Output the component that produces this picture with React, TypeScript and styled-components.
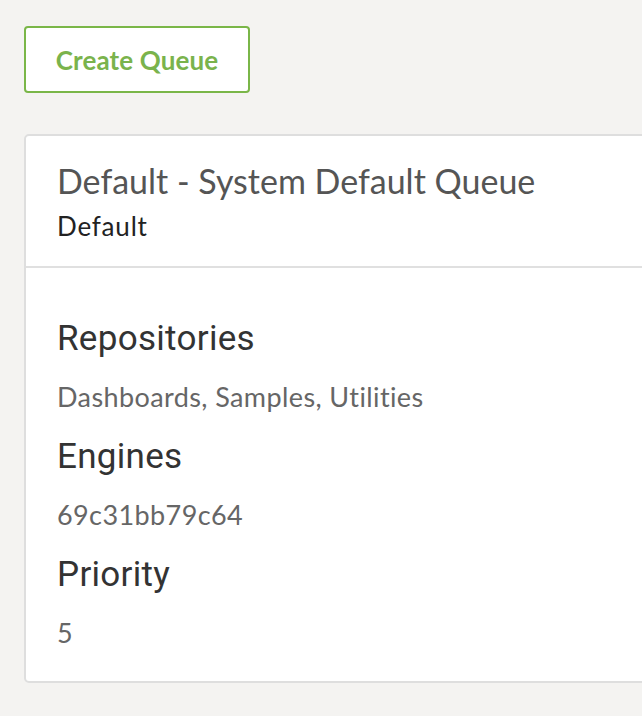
import React from 'react';
import styled, { createGlobalStyle } from 'styled-components';

const GlobalStyle = createGlobalStyle`
  html, body {
    margin: 0;
    padding: 0;
    background: #f4f3f1;
  }
  body {
    font-family: Lato, "Open Sans", sans-serif;
  }
`;

interface QueueField {
  label: string;
  value: string;
}

const queue = {
  title: 'Default - System Default Queue',
  name: 'Default',
  fields: [
    { label: 'Repositories', value: 'Dashboards, Samples, Utilities' },
    { label: 'Engines', value: '69c31bb79c64' },
    { label: 'Priority', value: '5' },
  ] as QueueField[],
};

export default function App() {
  return (
    <>
      <GlobalStyle />
      <Page>
        <CreateButton type="button">Create Queue</CreateButton>
        <Card>
          <CardHeader>
            <Title>{queue.title}</Title>
            <Subtitle>{queue.name}</Subtitle>
          </CardHeader>
          <CardBody>
            {queue.fields.map((field) => (
              <Field key={field.label}>
                <FieldLabel>{field.label}</FieldLabel>
                <FieldValue>{field.value}</FieldValue>
              </Field>
            ))}
          </CardBody>
        </Card>
      </Page>
    </>
  );
}

const Page = styled.div`
  display: flex;
  flex-direction: column;
  align-items: flex-start;
  gap: 41px;
  padding: 26px 0 34px 24px;
  overflow: hidden;
`;

const CreateButton = styled.button`
  box-sizing: border-box;
  width: 226px;
  height: 67px;
  background: #fff;
  border: 2px solid #7ab648;
  border-radius: 4px;
  color: #7ab34c;
  font-family: Lato, sans-serif;
  font-weight: 700;
  font-size: 26px;
  letter-spacing: 0.1px;
  cursor: pointer;
`;

const Card = styled.div`
  box-sizing: border-box;
  width: 680px;
  flex-shrink: 0;
  background: #fff;
  border: 2px solid #dedede;
  border-radius: 5px;
`;

const CardHeader = styled.div`
  display: flex;
  flex-direction: column;
  gap: 11px;
  padding: 26px 31px 25px;
  border-bottom: 2px solid #e0e0e0;
`;

const Title = styled.h2`
  margin: 0;
  font-family: Lato, sans-serif;
  font-weight: 400;
  font-size: 34px;
  line-height: 38px;
  color: #555;
`;

const Subtitle = styled.div`
  font-family: Lato, sans-serif;
  font-size: 26px;
  line-height: 30px;
  letter-spacing: 0.8px;
  color: #222;
`;

const CardBody = styled.div`
  display: flex;
  flex-direction: column;
  gap: 24px;
  padding: 51px 31px 32px;
`;

const Field = styled.div`
  display: flex;
  flex-direction: column;
  gap: 22px;
`;

const FieldLabel = styled.h3`
  margin: 0;
  font-family: Roboto, "Liberation Sans", sans-serif;
  font-weight: 400;
  font-size: 35px;
  line-height: 40px;
  letter-spacing: 0.3px;
  color: #333;
`;

const FieldValue = styled.div`
  font-family: Lato, sans-serif;
  font-size: 27px;
  line-height: 32px;
  letter-spacing: 0.4px;
  color: #666;
`;
